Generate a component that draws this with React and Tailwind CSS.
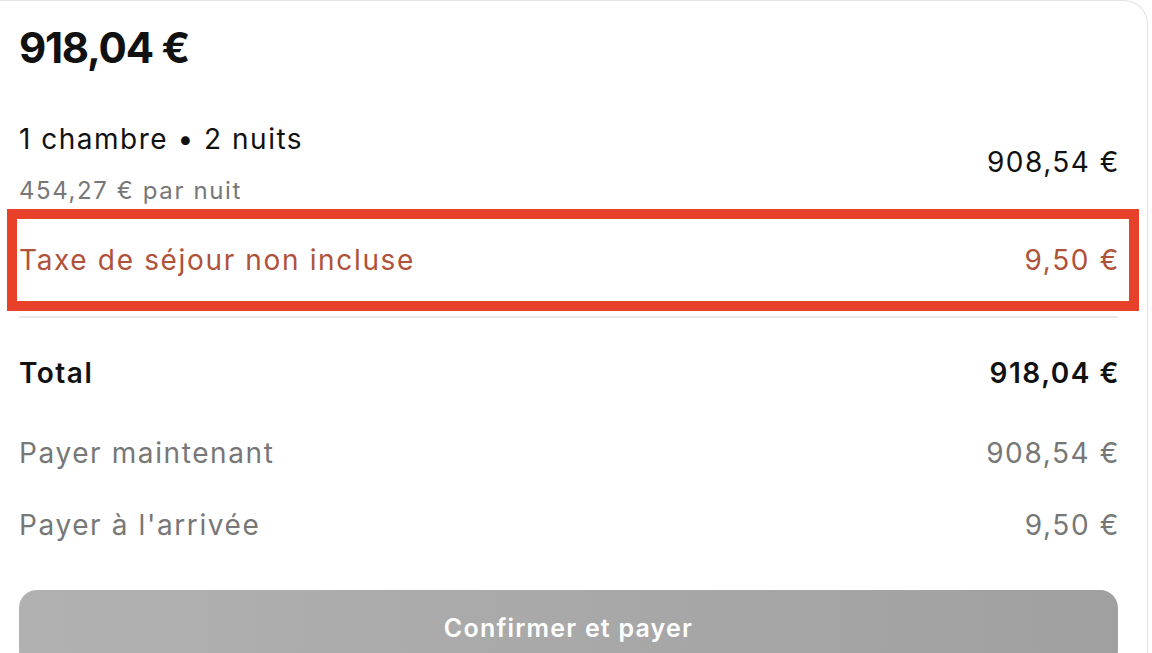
import React from "react";

const rows = [
  { label: "Payer maintenant", amount: "908,54 €", gap: "mt-[44px]" },
  { label: "Payer à l'arrivée", amount: "9,50 €", gap: "mt-[36px]" },
];

const App = () => {
  return (
    <div className="w-[1152px] h-[653px] overflow-hidden bg-white font-['Inter',sans-serif] antialiased text-[#111]">
      <div className="w-[1148px] min-h-[700px] border-t border-r border-[#e3e3e3] rounded-tr-[24px] pl-[19px] pr-[29px] pt-[22px]">
        <h1 className="text-[42px] leading-[50px] font-bold tracking-[-0.03em]">918,04 €</h1>

        {/* Room line */}
        <div className="mt-[48px] flex justify-between items-start tracking-[1.5px]">
          <div>
            <p className="text-[28px] leading-[36px]">1 chambre • 2 nuits</p>
            <p className="mt-[18px] text-[24px] leading-[32px] tracking-[1.6px] text-[#777]">454,27 € par nuit</p>
          </div>
          <span className="mt-[23px] -mr-[2px] text-[28px] leading-[36px]">908,54 €</span>
        </div>

        {/* Tourist tax, highlighted */}
        <div className="relative mt-[2px] h-[102px] flex justify-between items-center text-[28px] leading-[36px] tracking-[1.65px] text-[#b0523a]">
          <span>Taxe de séjour non incluse</span>
          <span className="-mr-[2px]">9,50 €</span>
          <div className="absolute -left-[12px] -right-[21px] top-0 bottom-0 border-[10px] border-[#e8412a] pointer-events-none" />
        </div>

        <div className="mt-[5px] h-[2px] bg-[#e8e8e8]" />

        <div className="mt-[37px] flex justify-between text-[28px] leading-[36px] font-semibold tracking-[1.5px]">
          <span>Total</span>
          <span className="-mr-[2px]">918,04 €</span>
        </div>

        {rows.map((r) => (
          <div key={r.label} className={`${r.gap} flex justify-between text-[28px] leading-[36px] tracking-[1.6px] text-[#777]`}>
            <span>{r.label}</span>
            <span className="-mr-[2px]">{r.amount}</span>
          </div>
        ))}

        <button className="mt-[47px] w-full h-[78px] rounded-[18px] bg-gradient-to-r from-[#b1b1b1] to-[#a0a0a0] text-white text-[25px] font-semibold tracking-[1.2px]">
          Confirmer et payer
        </button>
      </div>
    </div>
  );
};

export default App;
